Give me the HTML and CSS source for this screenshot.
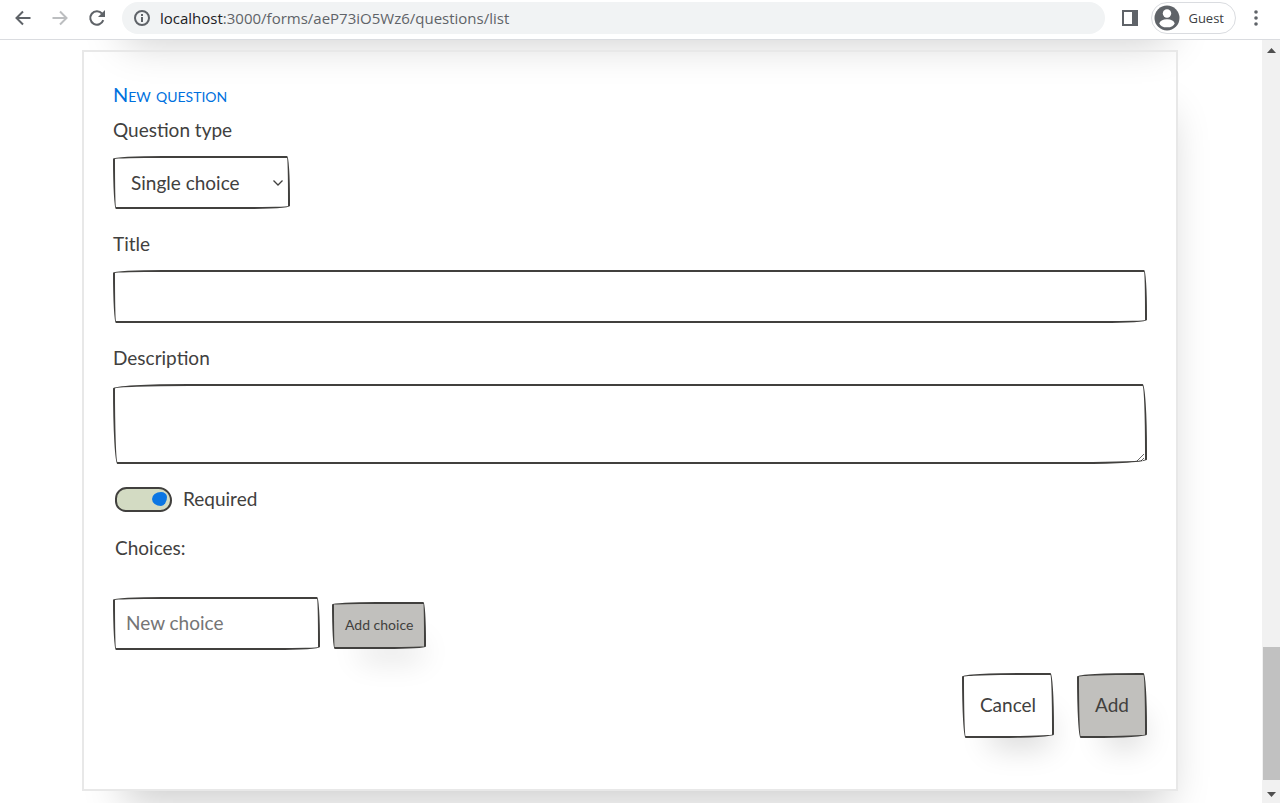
FILE: index.html
```html
<!DOCTYPE html>
<html lang="en">
<head>
    <meta charset="UTF-8">
    <meta name="viewport" content="width=device-width, initial-scale=1.0">
    <title>Questions</title>
    <link rel="stylesheet" href="styles.css">
</head>
<body>
    <!-- Browser toolbar -->
    <header class="toolbar">
        <button class="icon-button" type="button" aria-label="Back">
            <svg width="20" height="20" viewBox="0 0 20 20" fill="none" stroke="#5f6368" stroke-width="2"><path d="M17.5 10H4M10 3.5L3.5 10l6.5 6.5"/></svg>
        </button>
        <button class="icon-button" type="button" aria-label="Forward">
            <svg width="20" height="20" viewBox="0 0 20 20" fill="none" stroke="#bcbec0" stroke-width="2"><path d="M2.5 10H16M10 3.5l6.5 6.5-6.5 6.5"/></svg>
        </button>
        <button class="icon-button" type="button" aria-label="Reload">
            <svg width="20" height="20" viewBox="0 0 20 20" fill="none" stroke="#5f6368" stroke-width="2"><path d="M16.3 12.2A6.7 6.7 0 1 1 15 5.5"/><path d="M18 2v7h-7z" fill="#5f6368" stroke="none"/></svg>
        </button>
        <div class="address">
            <svg width="18" height="18" viewBox="0 0 18 18" fill="none" stroke="#5f6368" stroke-width="2"><circle cx="9" cy="9" r="7"/><path d="M9 8v5M9 5v2"/></svg>
            <span><span class="host">localhost</span>:3000/forms/aeP73iO5Wz6/questions/list</span>
        </div>
        <button class="icon-button panel-button" type="button" aria-label="Side panel">
            <svg width="16" height="16" viewBox="0 0 16 16"><path d="M0 0h16v16H0zM2 2v12h8V2z" fill="#5f6368" fill-rule="evenodd"/></svg>
        </button>
        <button class="profile" type="button">
            <svg width="26" height="26" viewBox="0 0 26 26"><circle cx="13" cy="13" r="12.5" fill="#5f6368"/><circle cx="13" cy="8.5" r="4.2" fill="#fff"/><ellipse cx="13" cy="18.3" rx="7.5" ry="4" fill="#fff"/></svg>
            Guest
        </button>
        <button class="icon-button menu-button" type="button" aria-label="Menu">
            <svg width="4" height="16" viewBox="0 0 4 16" fill="#5f6368"><circle cx="2" cy="2" r="1.8"/><circle cx="2" cy="8" r="1.8"/><circle cx="2" cy="14" r="1.8"/></svg>
        </button>
    </header>

    <div class="viewport">
        <main class="page">
            <section class="card card-previous"></section>

            <form class="card">
                <h2 class="card-title">New question</h2>

                <div class="field">
                    <label for="type">Question type</label>
                    <div class="select-wrap">
                        <select id="type" class="sketch">
                            <option>Single choice</option>
                        </select>
                        <svg class="chevron" width="12" height="8" viewBox="0 0 12 8" fill="none" stroke="#41403e" stroke-width="1.3"><path d="M1.5 1.5L6 6l4.5-4.5"/></svg>
                    </div>
                </div>

                <div class="field">
                    <label for="title">Title</label>
                    <input id="title" class="sketch" type="text">
                </div>

                <div class="field">
                    <label for="description">Description</label>
                    <textarea id="description" class="sketch"></textarea>
                </div>

                <div class="switch-row">
                    <input id="required" class="switch" type="checkbox" checked>
                    <label for="required">Required</label>
                </div>

                <label class="choices-label" for="choice">Choices:</label>
                <div class="new-choice">
                    <input id="choice" class="sketch" type="text" placeholder="New choice">
                    <button class="sketch btn btn-small btn-filled" type="button">Add choice</button>
                </div>

                <div class="actions">
                    <button class="sketch btn" type="button">Cancel</button>
                    <button class="sketch btn btn-filled" type="button">Add</button>
                </div>
            </form>
        </main>

        <!-- Scrollbar -->
        <div class="scrollbar">
            <svg width="9" height="5" viewBox="0 0 9 5" fill="#505050"><path d="M0 5l4.5-5L9 5z"/></svg>
            <div class="track"><div class="thumb"></div></div>
            <svg width="9" height="5" viewBox="0 0 9 5" fill="#505050"><path d="M0 0l4.5 5L9 0z"/></svg>
        </div>
    </div>
</body>
</html>
```
FILE: styles.css
```css
* {
    box-sizing: border-box;
}

body {
    margin: 0;
    height: 100vh;
    display: flex;
    flex-direction: column;
    overflow: hidden;
    background: #fff;
    color: #41403e;
    font-family: Lato, sans-serif;
    font-size: 19px;
    line-height: 28px;
}

/* Browser toolbar */
.toolbar {
    flex: none;
    display: flex;
    align-items: center;
    height: 40px;
    padding: 0 14px 3px 13px;
    border-bottom: 1px solid #dadce0;
    font-family: "Open Sans", sans-serif;
}

.icon-button {
    display: flex;
    align-items: center;
    justify-content: center;
    width: 20px;
    height: 28px;
    margin-right: 17px;
    padding: 0;
    border: none;
    background: none;
}

.address {
    flex: 1;
    display: flex;
    align-items: center;
    gap: 9px;
    height: 32px;
    margin-right: 15px;
    margin-left: -2px;
    padding-left: 11px;
    border-radius: 16px;
    background: #f1f3f4;
    color: #5f6368;
    font-size: 15px;
}

.host {
    color: #202124;
}

.icon-button.panel-button {
    margin-right: 11px;
}

.profile {
    display: flex;
    align-items: center;
    gap: 8px;
    height: 32px;
    margin-right: 10px;
    padding: 0 11px 0 2px;
    border: 1px solid #dadce0;
    border-radius: 16px;
    background: #fff;
    color: #3c4043;
    font: 13px "Open Sans", sans-serif;
}

.icon-button.menu-button {
    margin-right: 0;
}

/* Page area */
.viewport {
    flex: 1;
    min-height: 0;
    display: flex;
}

.page {
    flex: 1;
    display: flex;
    flex-direction: column;
    gap: 20px;
    min-width: 0;
    padding: 0 84px 0 82px;
    overflow: hidden;
}

.card {
    flex: none;
    padding: 28px 29px 51px;
    border: 2px solid #e8e8e8;
    box-shadow: 16px 38px 40px -26px rgba(0, 0, 0, 0.2);
}

/* Bottom edge of the card scrolled out of view */
.card-previous {
    height: 400px;
    margin-top: -410px;
}

.card-title {
    margin: 0 0 8px;
    color: #0071de;
    font-size: 20px;
    font-weight: 400;
    font-variant: small-caps;
}

/* Hand drawn borders */
.sketch {
    border: 2px solid #41403e;
    border-top-left-radius: 255px 15px;
    border-top-right-radius: 15px 225px;
    border-bottom-right-radius: 225px 15px;
    border-bottom-left-radius: 15px 255px;
    background: #fff;
    color: #41403e;
    font-family: inherit;
    font-size: 19px;
    outline: none;
}

.field {
    display: flex;
    flex-direction: column;
    align-items: flex-start;
    gap: 12px;
    margin-bottom: 21px;
}

input.sketch,
select.sketch {
    height: 53px;
    padding: 0 11px 2px;
}

.field input.sketch,
.field textarea.sketch {
    width: 100%;
}

textarea.sketch {
    display: block;
    height: 80px;
    padding: 10px;
}

.select-wrap {
    position: relative;
}

select.sketch {
    display: block;
    width: 177px;
    padding: 0 30px 0 16px;
    appearance: none;
}

.chevron {
    position: absolute;
    top: 23px;
    right: 6px;
    pointer-events: none;
}

/* Required switch */
.switch-row {
    display: flex;
    align-items: center;
    gap: 11px;
    margin-bottom: 21px;
    padding-left: 2px;
}

.switch {
    display: flex;
    align-items: center;
    justify-content: flex-end;
    width: 57px;
    height: 25px;
    margin: 0;
    padding-right: 3px;
    appearance: none;
    border: 2px solid #41403e;
    border-radius: 13px 15px 13px 12px;
    background: #d3dbc3;
}

.switch::after {
    content: "";
    width: 15px;
    height: 14px;
    border-radius: 60% 40% 40% 60% / 50% 35% 65% 50%;
    background: #0b76e3;
}

/* Choices */
.choices-label {
    display: block;
    margin-bottom: 35px;
    padding-left: 2px;
}

.new-choice {
    display: flex;
    align-items: flex-end;
    gap: 12px;
    margin-bottom: 23px;
}

.new-choice input {
    width: 207px;
}

.sketch::placeholder {
    color: #757575;
}

.btn {
    height: 65px;
    padding: 0 16px 2px;
    box-shadow: 12px 26px 30px -16px rgba(0, 0, 0, 0.15);
}

.btn-small {
    height: 47px;
    margin-bottom: 1px;
    padding: 0 11px 2px;
    font-size: 14px;
}

.btn-filled {
    background: #c1c0bd;
}

.actions {
    display: flex;
    justify-content: flex-end;
    gap: 23px;
}

/* Scrollbar */
.scrollbar {
    flex: none;
    display: flex;
    flex-direction: column;
    align-items: center;
    gap: 6px;
    width: 18px;
    padding: 8px 0 6px;
    background: #f1f1f1;
}

.track {
    flex: 1;
    display: flex;
    flex-direction: column;
    justify-content: flex-end;
    width: 100%;
    padding: 0 0 6px 1px;
}

.thumb {
    height: 18.5%;
    background: #c1c1c1;
}
```
